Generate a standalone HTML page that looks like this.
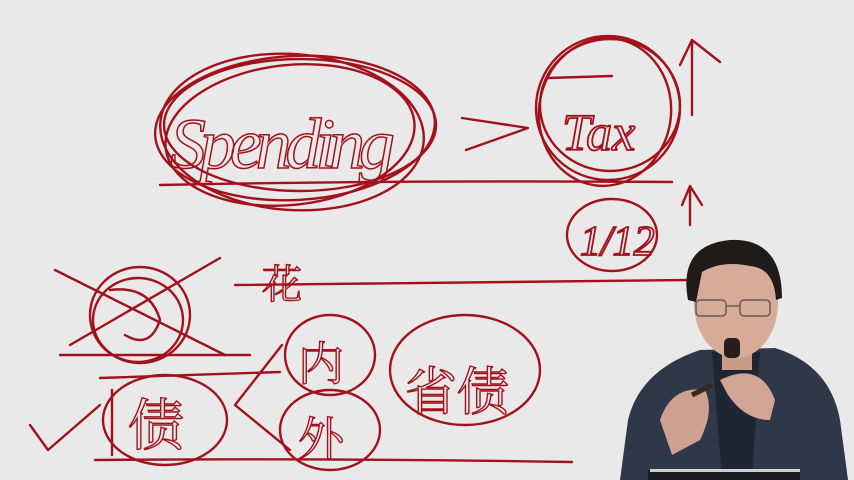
<!DOCTYPE html>
<html><head><meta charset="utf-8"><style>
html,body{margin:0;padding:0;background:#e9e9e9;width:854px;height:480px;overflow:hidden}
svg{display:block}
</style></head><body>
<svg width="854" height="480" viewBox="0 0 854 480" xmlns="http://www.w3.org/2000/svg">
<rect width="854" height="480" fill="#e9e9e9"/>
<g fill="none" stroke="#a3121c" stroke-width="2.4" stroke-linecap="round" stroke-linejoin="round">
<ellipse cx="295" cy="128" rx="140" ry="72" transform="rotate(-3 295 128)"/>
<ellipse cx="292" cy="132" rx="132" ry="78" transform="rotate(4 292 132)"/>
<ellipse cx="300" cy="125" rx="136" ry="66"/>
<ellipse cx="290" cy="135" rx="125" ry="70" transform="rotate(-6 290 135)"/>
<path d="M462 118 L528 128 L466 150"/>
<ellipse cx="608" cy="108" rx="72" ry="72"/>
<ellipse cx="605" cy="112" rx="66" ry="74" transform="rotate(8 605 112)"/>
<ellipse cx="610" cy="105" rx="70" ry="66"/>
<path d="M548 78 L612 76"/>
<path d="M692 115 L692 42 M680 65 L692 40 L720 62"/>
<path d="M690 225 L690 190 M682 205 L690 186 L702 205"/>
<ellipse cx="612" cy="235" rx="45" ry="36"/>
<path d="M160 185 Q400 180 672 182"/>
<path d="M235 285 Q460 282 690 280"/>
<path d="M95 460 Q330 458 572 462"/>
<path d="M60 355 L250 355"/>
<path d="M100 378 L280 372"/>
<ellipse cx="140" cy="315" rx="50" ry="48"/>
<ellipse cx="138" cy="320" rx="45" ry="42"/>
<path d="M55 270 L225 355 M70 345 L220 258"/>
<path d="M110 290 Q150 285 160 320 Q150 350 125 335"/>
<ellipse cx="165" cy="420" rx="62" ry="45"/>
<ellipse cx="330" cy="355" rx="45" ry="40"/>
<ellipse cx="330" cy="430" rx="50" ry="40"/>
<ellipse cx="465" cy="370" rx="75" ry="55"/>
<path d="M282 345 L235 405 L290 450"/>
<path d="M30 425 L48 450 L100 405"/>
<path d="M112 390 L112 455"/>
</g>
<g font-family="'Liberation Serif','Noto Serif CJK SC',serif" font-style="italic" fill="none" stroke="#a3121c">
<text x="170" y="168" font-size="72" stroke-width="1.5" textLength="225">Spending</text>
<text x="562" y="150" font-size="52" stroke-width="1.8">Tax</text>
<text x="580" y="255" font-size="42" stroke-width="1.8">1/12</text>
<text x="262" y="298" font-size="40" stroke-width="1.4" font-style="normal">花</text>
<text x="405" y="410" font-size="52" stroke-width="1.4" font-style="normal">省债</text>
<text x="128" y="445" font-size="56" stroke-width="1.4" font-style="normal">债</text>
<text x="298" y="380" font-size="46" stroke-width="1.4" font-style="normal">内</text>
<text x="298" y="455" font-size="46" stroke-width="1.4" font-style="normal">外</text>
</g>
<path d="M620 480 L628 420 Q640 370 700 350 L775 348 Q830 365 840 420 L848 480 Z" fill="#2e3849"/>
<path d="M712 352 L760 352 L752 480 L722 480 Z" fill="#1f2633"/>
<rect x="722" y="340" width="30" height="30" fill="#c99c8a"/>
<ellipse cx="736" cy="303" rx="42" ry="55" fill="#d6ab98"/>
<path d="M688 300 Q678 245 730 240 Q782 238 782 298 L776 300 Q774 268 750 266 Q722 260 702 272 L696 302 Z" fill="#1e1b1b"/>
<g fill="none" stroke="#6a5a55" stroke-width="1.5"><rect x="696" y="300" width="30" height="16" rx="4"/><rect x="740" y="300" width="30" height="16" rx="4"/><path d="M726 306 L740 306"/></g>
<rect x="724" y="338" width="16" height="20" rx="5" fill="#2a1b1b"/>
<path d="M660 420 Q672 385 705 390 Q715 410 700 440 L672 455 Z" fill="#cfa190"/>
<path d="M720 380 Q760 360 775 400 L770 420 Q745 420 728 395 Z" fill="#d1a493"/>
<path d="M692 395 L712 385" stroke="#3a2620" stroke-width="5"/>
<rect x="648" y="470" width="152" height="10" fill="#1b1c20"/>
<rect x="650" y="469" width="150" height="3" fill="#cfcfd4"/>
</svg>
</body></html>
